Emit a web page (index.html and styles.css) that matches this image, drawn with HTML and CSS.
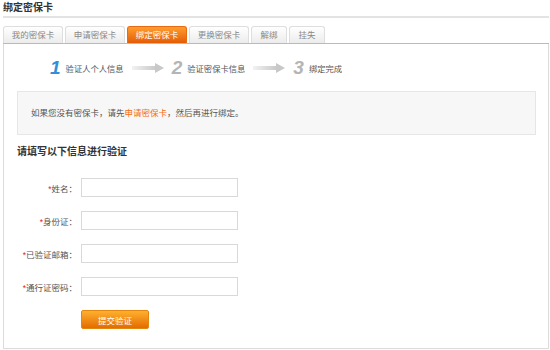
FILE: index.html
```html
<!DOCTYPE html>
<html>
<head>
  <meta charset="utf-8">
  <title>绑定密保卡</title>
  <link rel="stylesheet" href="styles.css">
</head>
<body>
  <div class="page">
    <h2 class="title">绑定密保卡</h2>

    <div class="tabs">
      <a class="tab">我的密保卡</a>
      <a class="tab">申请密保卡</a>
      <a class="tab active">绑定密保卡</a>
      <a class="tab">更换密保卡</a>
      <a class="tab small">解绑</a>
      <a class="tab small">挂失</a>
    </div>

    <div class="content">
      <div class="steps">
        <span class="num current">1</span>
        <span class="step-text">验证人个人信息</span>
        <svg class="arrow" width="32" height="10" viewBox="0 0 32 10">
          <defs>
            <linearGradient id="ar1" x1="0" x2="1" y1="0" y2="0">
              <stop offset="0" stop-color="#f2f2f2"/>
              <stop offset="1" stop-color="#c8c8c8"/>
            </linearGradient>
          </defs>
          <rect x="0" y="3" width="24" height="4" fill="url(#ar1)"/>
          <polygon points="23,0 32,5 23,10" fill="#c8c8c8"/>
        </svg>
        <span class="num">2</span>
        <span class="step-text">验证密保卡信息</span>
        <svg class="arrow" width="32" height="10" viewBox="0 0 32 10">
          <rect x="0" y="3" width="24" height="4" fill="url(#ar1)"/>
          <polygon points="23,0 32,5 23,10" fill="#c8c8c8"/>
        </svg>
        <span class="num">3</span>
        <span class="step-text">绑定完成</span>
      </div>

      <div class="notice">
        如果您没有密保卡，请先<a href="#" class="link">申请密保卡</a>，然后再进行绑定。
      </div>

      <h3 class="form-title">请填写以下信息进行验证</h3>

      <form class="form">
        <div class="row">
          <label><em>*</em>姓名：</label>
          <input type="text">
        </div>
        <div class="row">
          <label><em>*</em>身份证：</label>
          <input type="text">
        </div>
        <div class="row">
          <label><em>*</em>已验证邮箱：</label>
          <input type="text">
        </div>
        <div class="row">
          <label><em>*</em>通行证密码：</label>
          <input type="password">
        </div>
        <div class="row">
          <label></label>
          <button type="button" class="submit">提交验证</button>
        </div>
      </form>
    </div>
  </div>
</body>
</html>
```

FILE: styles.css
```css
body {
  margin: 0;
  font-family: "Liberation Sans", "Noto Sans CJK SC", sans-serif;
  font-size: 11px;
  color: #555;
  background: #fff;
}

.page {
  width: 546px;
  padding: 0 1px 0 3px;
}

.title {
  margin: 0;
  font-size: 10px;
  line-height: 16px;
  height: 16px;
  font-weight: bold;
  color: #333;
  border-bottom: 2px solid #e3e3e3;
}

.tabs {
  display: flex;
  gap: 2px;
  margin-top: 8px;
  border-bottom: 1px solid #f7a878;
}

.tab {
  width: 60px;
  height: 17px;
  line-height: 17px;
  box-sizing: border-box;
  text-align: center;
  color: #888;
  font-size: 8.5px;
  background: linear-gradient(#ffffff, #ececec);
  border: 1px solid #dedede;
  border-bottom: none;
  border-radius: 3px 3px 0 0;
  cursor: pointer;
}

.tab.small {
  width: 36px;
}

.tab.active {
  color: #fff;
  background: linear-gradient(#ff9d2f, #e45c05);
  border-color: #e86a12;
}

.content {
  border: 1px solid #dcdcdc;
  border-top: none;
  height: 304px;
  padding: 0 12px 0 13px;
}

.steps {
  display: flex;
  align-items: center;
  height: 47px;
  padding-left: 33px;
}

.num {
  font-family: "Liberation Sans", Arial, sans-serif;
  font-style: italic;
  font-weight: bold;
  font-size: 19px;
  color: #b5b5b5;
  margin-right: 5px;
}

.num.current {
  color: #2f8fdb;
}

.step-text {
  font-size: 8.3px;
  color: #555;
}

.arrow {
  margin: 0 8px;
}

.notice {
  height: 42px;
  line-height: 42px;
  padding-left: 13px;
  background: #f7f7f7;
  border: 1px solid #e6e6e6;
  font-size: 8.5px;
  color: #555;
}

.link {
  color: #f46d13;
  text-decoration: none;
}

.form-title {
  margin: 9px 0 0;
  font-size: 10px;
  line-height: 16px;
  color: #333;
}

.form {
  display: flex;
  flex-direction: column;
  gap: 14px;
  margin: 18px 0 0 -4px;
}

.row {
  display: flex;
  align-items: center;
  height: 19px;
}

.row label {
  flex: 0 0 64px;
  white-space: nowrap;
  text-align: right;
  font-size: 8.5px;
  color: #555;
  margin-right: 4px;
}

.row em {
  font-style: normal;
  color: #e21b1b;
}

.row input {
  width: 157px;
  height: 19px;
  box-sizing: border-box;
  border: 1px solid #d9d9d9;
  margin: 0;
  padding: 0 3px;
}

.submit {
  width: 68px;
  height: 19px;
  border: 1px solid #e3860f;
  border-radius: 2px;
  background: linear-gradient(#ffb02f, #e46c00);
  color: #fff;
  font-family: "Noto Sans CJK SC", sans-serif;
  font-size: 8.5px;
  padding: 0;
  cursor: pointer;
}
```
